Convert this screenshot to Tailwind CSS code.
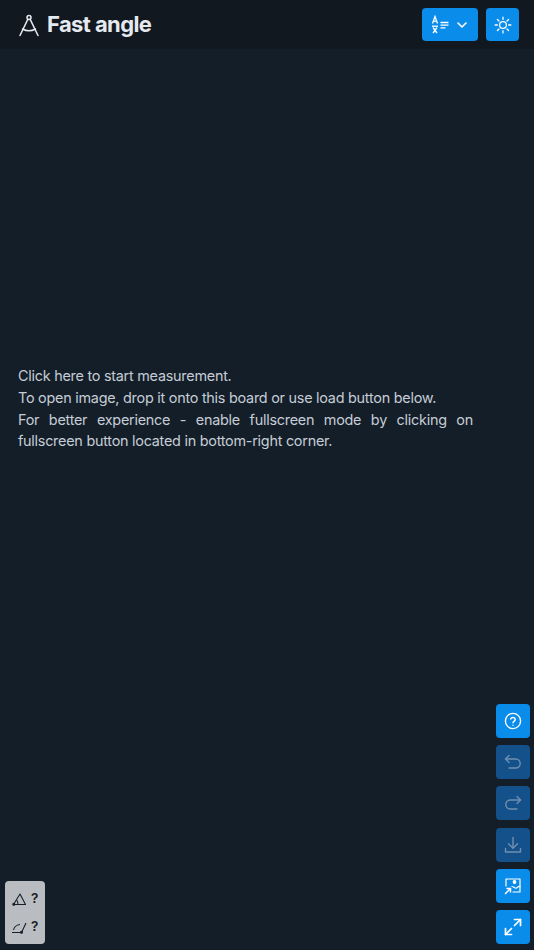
<!doctype html>
<html lang="en">

<head>
    <title>Fast angle</title>
    <meta charset="utf-8" />
    <meta name="viewport" content="width=device-width, initial-scale=1" />
    <script src="https://cdn.jsdelivr.net/npm/@tailwindcss/browser@4"></script>
</head>

<body class="h-screen overflow-hidden bg-[#141e28] font-['Inter',sans-serif]">
    <div class="relative flex flex-col w-full h-full">
        <!-- header -->
        <header class="flex justify-between items-center h-[49px] pl-[18px] pr-[15px] bg-[#12181f]">
            <div class="flex items-center gap-[7px]">
                <svg class="w-[22px] h-[24px] text-[#e5e9f0]" viewBox="0 0 22 24" fill="none" stroke="currentColor" stroke-width="1.5" stroke-linecap="round" stroke-linejoin="round">
                    <circle cx="11" cy="4.5" r="2" />
                    <path d="M9.8 6.3 2 22.5" />
                    <path d="M12.2 6.3 20 22.5" />
                    <path d="M4.5 16c4 2.2 9 2.2 13 0" />
                </svg>
                <span class="text-[22px] tracking-[-0.6px] font-bold text-[#e5e9f0] leading-none mb-[2px]">Fast angle</span>
            </div>
            <div class="flex items-center gap-2">
                <button class="flex items-center justify-between w-14 h-[33px] pl-[9px] pr-[10px] rounded-[4px] bg-[#0a8ceb] text-white">
                    <svg class="w-[19px] h-[19px]" viewBox="0 0 19 19" fill="none" stroke="currentColor" stroke-width="1.3">
                        <path d="M1.5 8.5 4 1.5l2.5 7" />
                        <path d="M2.3 6.2h3.4" />
                        <path d="M1 11.2h6" />
                        <path d="M2 18l4-5.5" />
                        <path d="M6 18l-4-5.5" />
                        <path d="M9.5 7.5h8M9.5 10.2h8M9.5 12.9h5" />
                    </svg>
                    <svg class="w-3 h-3" viewBox="0 0 12 12" fill="none" stroke="currentColor" stroke-width="1.6" stroke-linecap="round" stroke-linejoin="round">
                        <path d="M2 4l4 4 4-4" />
                    </svg>
                </button>
                <button class="flex items-center justify-center w-[33px] h-[33px] rounded-[4px] bg-[#0a8ceb] text-white">
                    <svg class="w-[18px] h-[18px]" viewBox="0 0 24 24" fill="none" stroke="currentColor" stroke-width="1.7" stroke-linecap="round">
                        <circle cx="12" cy="12" r="4.5" />
                        <path d="M12 1.5v3M12 19.5v3M1.5 12h3M19.5 12h3M4.6 4.6l2.1 2.1M17.3 17.3l2.1 2.1M4.6 19.4l2.1-2.1M17.3 6.7l2.1-2.1" />
                    </svg>
                </button>
            </div>
        </header>

        <!-- board -->
        <main class="flex flex-1 items-center pl-[18px] pr-[61px] pb-[182px]">
            <div class="text-[14.4px] tracking-[-0.25px] leading-[21.7px] text-[#c5ccd6] text-justify">
                <p>Click here to start measurement.</p>
                <p>To open image, drop it onto this board or use load button below.</p>
                <p>For better experience - enable fullscreen mode by clicking on fullscreen button located in bottom-right corner.</p>
            </div>
        </main>

        <!-- results -->
        <div class="absolute left-[5px] bottom-[6px] flex flex-col justify-center gap-[13px] w-10 h-[63px] pl-[7px] pt-px rounded-[4px] bg-[#b9bdc2] text-[#1a2026]">
            <div class="flex items-center gap-[4px]">
                <svg class="w-[15px] h-[15px]" viewBox="0 0 15 15" fill="none" stroke="currentColor" stroke-width="1.1" stroke-linejoin="round">
                    <path d="M1.5 12.5 8 2l5.5 10.5z" />
                    <path d="M4.5 8c1 .8 1.5 2.5 1.5 4.5" />
                    <circle cx="1.8" cy="12.3" r="1" fill="currentColor" />
                </svg>
                <span class="text-[13.5px] font-semibold leading-none">?</span>
            </div>
            <div class="flex items-center gap-[4px]">
                <svg class="w-[15px] h-[15px]" viewBox="0 0 15 15" fill="none" stroke="currentColor" stroke-width="1.1" stroke-linejoin="round">
                    <path d="M0 12.5h9.5L14 3" />
                    <path d="M1.5 10c.6-3 2.7-5 6.5-5.5" />
                    <circle cx="9.5" cy="12.3" r="1" fill="currentColor" />
                </svg>
                <span class="text-[13.5px] font-semibold leading-none">?</span>
            </div>
        </div>

        <!-- tools -->
        <div class="absolute right-1 bottom-[6px] flex flex-col gap-[7.2px]">
            <button class="flex items-center justify-center w-[34px] h-[34px] rounded-[4px] bg-[#0a8ceb] text-white">
                <svg class="w-[18px] h-[18px]" viewBox="0 0 18 18" fill="none" stroke="currentColor" stroke-width="1.4" stroke-linecap="round" stroke-linejoin="round">
                    <circle cx="9" cy="9" r="7.6" />
                    <path d="M6.7 7a2.4 2.4 0 0 1 4.6.6c0 1.5-2.3 2-2.3 3.1" />
                    <path d="M9 13.2v.1" />
                </svg>
            </button>
            <button class="flex items-center justify-center w-[34px] h-[34px] rounded-[4px] bg-[#14518a] text-[#6f8fb0]">
                <svg class="w-[18px] h-[18px]" viewBox="0 0 18 18" fill="none" stroke="currentColor" stroke-width="1.4" stroke-linecap="round" stroke-linejoin="round">
                    <path d="M5 2.5 1.5 6 5 9.5" />
                    <path d="M1.5 6h10.2a4.5 4.5 0 0 1 0 9H5" />
                </svg>
            </button>
            <button class="flex items-center justify-center w-[34px] h-[34px] rounded-[4px] bg-[#14518a] text-[#6f8fb0]">
                <svg class="w-[18px] h-[18px]" viewBox="0 0 18 18" fill="none" stroke="currentColor" stroke-width="1.4" stroke-linecap="round" stroke-linejoin="round">
                    <path d="M13 2.5 16.5 6 13 9.5" />
                    <path d="M16.5 6H6.3a4.5 4.5 0 0 0 0 9H13" />
                </svg>
            </button>
            <button class="flex items-center justify-center w-[34px] h-[34px] rounded-[4px] bg-[#14518a] text-[#6f8fb0]">
                <svg class="w-[18px] h-[18px]" viewBox="0 0 18 18" fill="none" stroke="currentColor" stroke-width="1.4" stroke-linecap="round" stroke-linejoin="round">
                    <path d="M9 1.5v10.5" />
                    <path d="M4.5 7.8 9 12.3l4.5-4.5" />
                    <path d="M1.5 12.5v3.5h15v-3.5" />
                </svg>
            </button>
            <button class="flex items-center justify-center w-[34px] h-[34px] rounded-[4px] bg-[#0a8ceb] text-white">
                <svg class="w-[18px] h-[18px]" viewBox="0 0 18 18" fill="none" stroke="currentColor" stroke-width="1.2" stroke-linecap="round" stroke-linejoin="round">
                    <path d="M2 9V2h14v13H9" />
                    <circle cx="10.5" cy="5" r="1.3" fill="currentColor" />
                    <path d="M8 9.5c2 .2 3 2.2 4.5 1.5 1-.5 1.8-2 3.5-1.5" />
                    <path d="M1.5 16.5 6.5 11.5" stroke-width="1.5" />
                    <path d="M3 11.5h3.5V15" stroke-width="1.5" />
                </svg>
            </button>
            <button class="flex items-center justify-center w-[34px] h-[34px] rounded-[4px] bg-[#0a8ceb] text-white">
                <svg class="w-[18px] h-[18px]" viewBox="0 0 18 18" fill="none" stroke="currentColor" stroke-width="1.7" stroke-linecap="round" stroke-linejoin="round">
                    <path d="M10.5 1.5h6v6" />
                    <path d="M16.5 1.5 10.5 7.5" />
                    <path d="M7.5 16.5h-6v-6" />
                    <path d="M1.5 16.5l6-6" />
                </svg>
            </button>
        </div>
    </div>
</body>

</html>
